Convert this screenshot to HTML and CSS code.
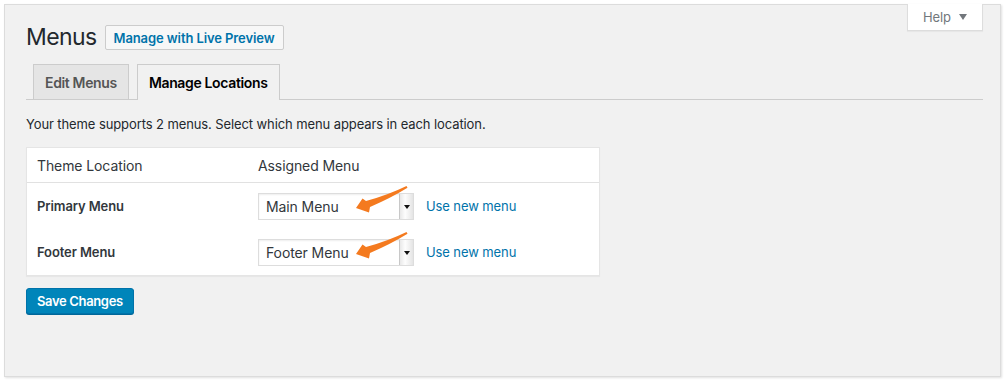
FILE: index.html
```html
<!DOCTYPE html>
<html lang="en">
<head>
    <meta charset="UTF-8">
    <meta name="viewport" content="width=device-width, initial-scale=1.0">
    <title>Menus - Manage Locations</title>
    <link rel="stylesheet" href="styles.css">
</head>
<body>
    <div class="wrap">
        <!-- Help tab hanging from the top edge -->
        <div class="help-tab">Help <span class="help-caret"></span></div>

        <!-- Title -->
        <div class="title-row">
            <h1>Menus</h1>
            <a class="page-action" href="#">Manage with Live Preview</a>
        </div>

        <!-- Tabs -->
        <div class="nav-tabs">
            <a class="nav-tab" href="#">Edit Menus</a>
            <a class="nav-tab active" href="#">Manage Locations</a>
        </div>

        <p class="intro">Your theme supports 2 menus. Select which menu appears in each location.</p>

        <!-- Locations table -->
        <div class="locations">
            <div class="loc-row loc-head">
                <div class="loc-name">Theme Location</div>
                <div class="loc-menu">Assigned Menu</div>
            </div>
            <div class="loc-body">
                <div class="loc-row">
                    <div class="loc-name label">Primary Menu</div>
                    <div class="loc-menu">
                        <div class="select">
                            <span class="select-value">Main Menu</span>
                            <span class="select-arrow"></span>
                        </div>
                        <a class="new-menu" href="#">Use new menu</a>
                        <svg class="pointer" width="58" height="30" viewBox="0 0 58 30">
                            <path d="M53.5 1 Q35 10 13 16 L9.5 13.5 L3 23 L16 27.5 L17 22 Q38 13 54.5 2.8 Z" />
                        </svg>
                    </div>
                </div>
                <div class="loc-row">
                    <div class="loc-name label">Footer Menu</div>
                    <div class="loc-menu">
                        <div class="select">
                            <span class="select-value">Footer Menu</span>
                            <span class="select-arrow"></span>
                        </div>
                        <a class="new-menu" href="#">Use new menu</a>
                        <svg class="pointer" width="58" height="30" viewBox="0 0 58 30">
                            <path d="M53.5 1 Q35 10 13 16 L9.5 13.5 L3 23 L16 27.5 L17 22 Q38 13 54.5 2.8 Z" />
                        </svg>
                    </div>
                </div>
            </div>
        </div>

        <button class="button-primary">Save Changes</button>
    </div>
</body>
</html>
```

FILE: styles.css
```css
body {
    margin: 0;
    padding: 0;
    background: #fff;
    color: #23282d;
    font-family: 'Inter', 'Liberation Sans', sans-serif;
    font-size: 13px;
    letter-spacing: -0.1px;
}

.wrap {
    position: relative;
    margin: 4px;
    height: 373px;
    box-sizing: border-box;
    padding: 0 17px 0 21px;
    background: #f1f1f1;
    border: 1px solid #dcdcdc;
    box-shadow: 1px 1px 2px rgba(0,0,0,0.12);
}

/* Help tab */
.help-tab {
    position: absolute;
    top: -1px;
    right: 17px;
    width: 76px;
    height: 27px;
    box-sizing: border-box;
    padding-left: 15px;
    display: flex;
    align-items: center;
    gap: 6px;
    background: #fff;
    border: 1px solid #ddd;
    border-top: none;
    box-shadow: 0 1px 1px rgba(0,0,0,0.04);
    color: #72777c;
    font-size: 13px;
}

.help-caret {
    width: 0;
    height: 0;
    border-left: 4px solid transparent;
    border-right: 4px solid transparent;
    border-top: 6px solid #72777c;
    margin-left: 2px;
}

/* Title */
.title-row {
    display: flex;
    align-items: center;
    gap: 8px;
    padding-top: 20px;
}

h1 {
    margin: 0;
    font-size: 23px;
    font-weight: 400;
    line-height: 25px;
    letter-spacing: -0.6px;
    color: #23282d;
}

.page-action {
    display: flex;
    align-items: center;
    height: 25px;
    box-sizing: border-box;
    padding: 0 8px;
    border: 1px solid #ccc;
    border-radius: 2px;
    background: #f7f7f7;
    color: #0073aa;
    font-size: 13px;
    font-weight: 600;
    text-decoration: none;
}

/* Tabs */
.nav-tabs {
    display: flex;
    gap: 8px;
    margin-top: 14px;
    padding-left: 7px;
    border-bottom: 1px solid #ccc;
    height: 35px;
}

.nav-tab {
    display: flex;
    align-items: center;
    height: 35px;
    box-sizing: border-box;
    padding: 0 11px;
    border: 1px solid #ccc;
    border-bottom: none;
    background: #e5e5e5;
    color: #555;
    font-size: 14px;
    font-weight: 600;
    letter-spacing: -0.35px;
    text-decoration: none;
}

.nav-tab.active {
    height: 36px;
    background: #f1f1f1;
    color: #000;
}

.intro {
    margin: 14px 0 13px;
    line-height: 20px;
    color: #23282d;
}

/* Locations table */
.locations {
    width: 574px;
    box-sizing: border-box;
    background: #fff;
    border: 1px solid #e5e5e5;
    box-shadow: 0 1px 1px rgba(0,0,0,0.04);
}

.loc-row {
    display: flex;
    align-items: center;
    height: 46px;
}

.loc-head {
    height: 34px;
    border-bottom: 1px solid #e1e1e1;
    font-size: 14px;
    color: #32373c;
}

.loc-name {
    width: 221px;
    padding-left: 10px;
}

.loc-name.label {
    font-weight: 600;
    color: #32373c;
}

.loc-menu {
    position: relative;
    display: flex;
    align-items: center;
    gap: 12px;
}

.select {
    display: flex;
    align-items: center;
    justify-content: space-between;
    width: 156px;
    height: 27px;
    box-sizing: border-box;
    border: 1px solid #ddd;
    background: #fff;
    box-shadow: inset 0 1px 2px rgba(0,0,0,0.07);
    font-size: 14px;
    color: #32373c;
}

.select-value {
    padding-left: 7px;
}

.select-arrow {
    position: relative;
    width: 13px;
    height: 25px;
    border-left: 1px solid #c8c8c8;
    background: linear-gradient(to right, #e8e8e8, #fdfdfd 40%, #e4e4e4);
}

.select-arrow::after {
    content: "";
    position: absolute;
    left: 4px;
    top: 11px;
    border-left: 3px solid transparent;
    border-right: 3px solid transparent;
    border-top: 4px solid #111;
}

.new-menu {
    color: #0073aa;
    text-decoration: none;
}

.pointer {
    position: absolute;
    left: 95px;
    top: -8px;
    fill: #f47a1f;
}

.button-primary {
    display: block;
    margin-top: 12px;
    height: 26px;
    padding: 0 10px;
    border: 1px solid #0073aa;
    border-radius: 3px;
    background: #0085ba;
    box-shadow: 0 1px 0 #006799;
    color: #fff;
    font-family: inherit;
    font-size: 13px;
    font-weight: 600;
    letter-spacing: -0.35px;
}
```
